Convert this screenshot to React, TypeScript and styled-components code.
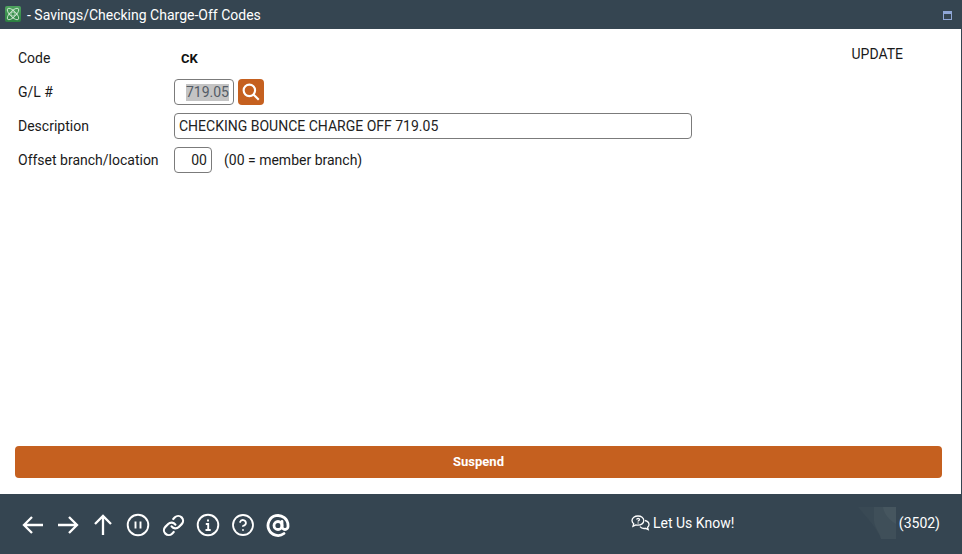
import React from 'react';
import styled, { createGlobalStyle } from 'styled-components';
import { Link, CircleHelp, AtSign } from 'lucide-react';

const GlobalStyle = createGlobalStyle`
  html, body {
    margin: 0;
    padding: 0;
    background: #fff;
    font-family: Roboto, "Liberation Sans", sans-serif;
  }
`;

const LineIcon = ({ width = 2.3, children }: { width?: number; children: React.ReactNode }) => (
  <svg width="24" height="24" viewBox="0 0 24 24" fill="none" stroke="#fff" strokeWidth={width}>
    {children}
  </svg>
);

const footerIcons = [
  <LineIcon key="back"><path d="M22 12H3M11 4l-8 8 8 8" /></LineIcon>,
  <LineIcon key="next"><path d="M2 12h19M13 4l8 8-8 8" /></LineIcon>,
  <LineIcon key="up"><path d="M12 22V3M4 11l8-8 8 8" /></LineIcon>,
  <LineIcon key="pause" width={1.9}>
    <circle cx="12" cy="12" r="10.300" />
    <path d="M9.500 8.500v7M14.500 8.500v7" />
  </LineIcon>,
  <Link key="link" size={23} strokeWidth={2.3} color="#fff" />,
  <LineIcon key="info" width={1.9}>
    <circle cx="12" cy="12" r="10.300" />
    <path d="M12 6.500v2M9.800 11h2.400v6M9.500 17h5.200" />
  </LineIcon>,
  <CircleHelp key="help" size={26} strokeWidth={1.8} color="#fff" />,
  <AtSign key="at" size={25} strokeWidth={2.8} color="#fff" />,
];

export default function App() {
  return (
    <>
      <GlobalStyle />
      <Page>
        <TitleBar>
          <AppLogo viewBox="0 0 16 16">
            <defs>
              <linearGradient id="logoFill" x1="0" y1="0" x2="0" y2="1">
                <stop offset="0" stopColor="#4fa45f" />
                <stop offset="1" stopColor="#2a8040" />
              </linearGradient>
            </defs>
            <rect width="16" height="16" rx="2" fill="url(#logoFill)" />
            <g fill="none" stroke="#e0f0e2" strokeWidth="0.8">
              <ellipse cx="8" cy="8" rx="7.500" ry="3" transform="rotate(45 8 8)" />
              <ellipse cx="8" cy="8" rx="7.500" ry="3" transform="rotate(-45 8 8)" />
              <circle cx="8" cy="8" r="2.200" />
            </g>
          </AppLogo>
          <Title>- Savings/Checking Charge-Off Codes</Title>
          <WindowButton />
        </TitleBar>
        <Content>
          <FormArea>
            <Form>
              <Label>Code</Label>
              <Strong>CK</Strong>
              <Label>G/L #</Label>
              <Field>
                <GlInput><Selected>719.05</Selected></GlInput>
                <SearchButton>
                  <svg width="18" height="18" viewBox="0 0 22 22" fill="none" stroke="#fff" strokeWidth="2.600">
                    <circle cx="9" cy="9" r="7" />
                    <path d="M14 14l6.500 6.500" />
                  </svg>
                </SearchButton>
              </Field>
              <Label>Description</Label>
              <Field>
                <DescriptionInput>CHECKING BOUNCE CHARGE OFF 719.05</DescriptionInput>
              </Field>
              <Label>Offset branch/location</Label>
              <Field>
                <OffsetInput>00</OffsetInput>
                <Hint>(00 = member branch)</Hint>
              </Field>
            </Form>
            <Mode>UPDATE</Mode>
          </FormArea>
          <SuspendButton>Suspend</SuspendButton>
        </Content>
        <Footer>
          <IconRow>
            {footerIcons.map((icon, i) => (
              <IconSlot key={i}>{icon}</IconSlot>
            ))}
          </IconRow>
          <Feedback>
            <svg width="19" height="16" viewBox="0 0 19 16" fill="none" stroke="#fff" strokeWidth="1.300">
              <path d="M7 1c3.200 0 5.800 2 5.800 4.600S10.200 10.200 7 10.200c-.8 0-1.500-.1-2.200-.3L2 11.200l.7-2.400C1.600 7.900 1 6.800 1 5.600 1 3 3.800 1 7 1z" />
              <path d="M14 5.500c2.300.5 4 2 4 4 0 1.100-.5 2-1.400 2.800l.6 2.200-2.600-1.200c-2.200.5-4.400-.2-5.600-1.700" />
              <path d="M5.600 4.500c.2-.8.800-1.200 1.500-1.200.8 0 1.400.5 1.400 1.200 0 1-1.400 1.100-1.400 2.100M7.100 7.600v.8" />
            </svg>
            Let Us Know!
          </Feedback>
          <Status>
            <svg width="38" height="32" viewBox="0 0 38 32">
              <path d="M0 0h38v32H23C18 20 10 12 0 0z" fill="#394954" />
              <path d="M16 0h22v32H23c-1-6-6-10-7-18z" fill="#3f4f59" />
              <path d="M25 0h13v17C31 13 26 7 25 0z" fill="#46565f" />
            </svg>
            (3502)
          </Status>
        </Footer>
      </Page>
    </>
  );
}

const Page = styled.div`
  width: 962px;
  height: 554px;
  display: flex;
  flex-direction: column;
  overflow: hidden;
  box-sizing: border-box;
  border-right: 1px solid #354551;
  color: #1a1a1a;
  font-size: 14px;
`;

const TitleBar = styled.div`
  height: 29px;
  flex: none;
  display: flex;
  align-items: center;
  gap: 6px;
  padding: 0 9px 0 5px;
  background: #354551;
`;

const AppLogo = styled.svg`
  width: 16px;
  height: 16px;
  flex: none;
  margin-bottom: 2px;
`;

const Title = styled.span`
  flex: 1;
  color: #fff;
  font-size: 14px;
`;

const WindowButton = styled.span`
  width: 9px;
  height: 9px;
  box-sizing: border-box;
  margin-top: 2px;
  border: 1px solid #8fa6d6;
  border-top-width: 3px;
`;

const Content = styled.div`
  flex: 1;
  display: flex;
  flex-direction: column;
  justify-content: space-between;
  padding: 12px 19px 16px 15px;
  background: #fff;
`;

const FormArea = styled.div`
  display: flex;
  justify-content: space-between;
  align-items: flex-start;
`;

const Form = styled.div`
  display: grid;
  grid-template-columns: 156px auto;
  grid-auto-rows: 34px;
  align-items: center;
  padding-left: 3px;
`;

const Label = styled.span`
  font-size: 14px;
`;

const Strong = styled.span`
  font-size: 13px;
  font-weight: 700;
  color: #111;
  padding-left: 7px;
`;

const Field = styled.div`
  display: flex;
  align-items: center;
  gap: 4px;
`;

const Input = styled.div`
  height: 26px;
  box-sizing: border-box;
  display: flex;
  align-items: center;
  padding: 0 4px;
  background: #fff;
  border: 1px solid #7b7b7b;
  border-radius: 4px;
  font-size: 14px;
  color: #222;
`;

const GlInput = styled(Input)`
  width: 60px;
  justify-content: flex-end;
`;

const Selected = styled.span`
  background: #c4c4c4;
  color: #545c66;
  line-height: 17px;
`;

const SearchButton = styled.div`
  width: 26px;
  height: 26px;
  display: flex;
  align-items: center;
  justify-content: center;
  background: #c5601f;
  border-radius: 4px;
`;

const DescriptionInput = styled(Input)`
  width: 518px;
`;

const OffsetInput = styled(Input)`
  width: 38px;
  justify-content: flex-end;
`;

const Hint = styled.span`
  margin-left: 8px;
  font-size: 14px;
`;

const Mode = styled.span`
  margin: 5px 39px 0 0;
  font-size: 14px;
`;

const SuspendButton = styled.div`
  height: 32px;
  box-sizing: border-box;
  padding-bottom: 2px;
  display: flex;
  align-items: center;
  justify-content: center;
  background: #c5601f;
  border-radius: 4px;
  color: #fff;
  font-size: 13px;
  font-weight: 700;
`;

const Footer = styled.div`
  height: 60px;
  flex: none;
  display: flex;
  align-items: center;
  padding: 0 21px 0 21px;
  background: #354551;
  color: #fff;
`;

const IconRow = styled.div`
  width: 610px;
  display: flex;
  align-items: center;
  gap: 11px;
  padding-top: 2px;
`;

const IconSlot = styled.span`
  width: 24px;
  height: 26px;
  display: flex;
  align-items: center;
  justify-content: center;
`;

const Feedback = styled.div`
  display: flex;
  align-items: center;
  gap: 3px;
  font-size: 14px;
  margin-bottom: 2px;
`;

const Status = styled.div`
  margin-left: auto;
  display: flex;
  align-items: center;
  gap: 3px;
  font-size: 14px;
  margin-bottom: 2px;
`;
